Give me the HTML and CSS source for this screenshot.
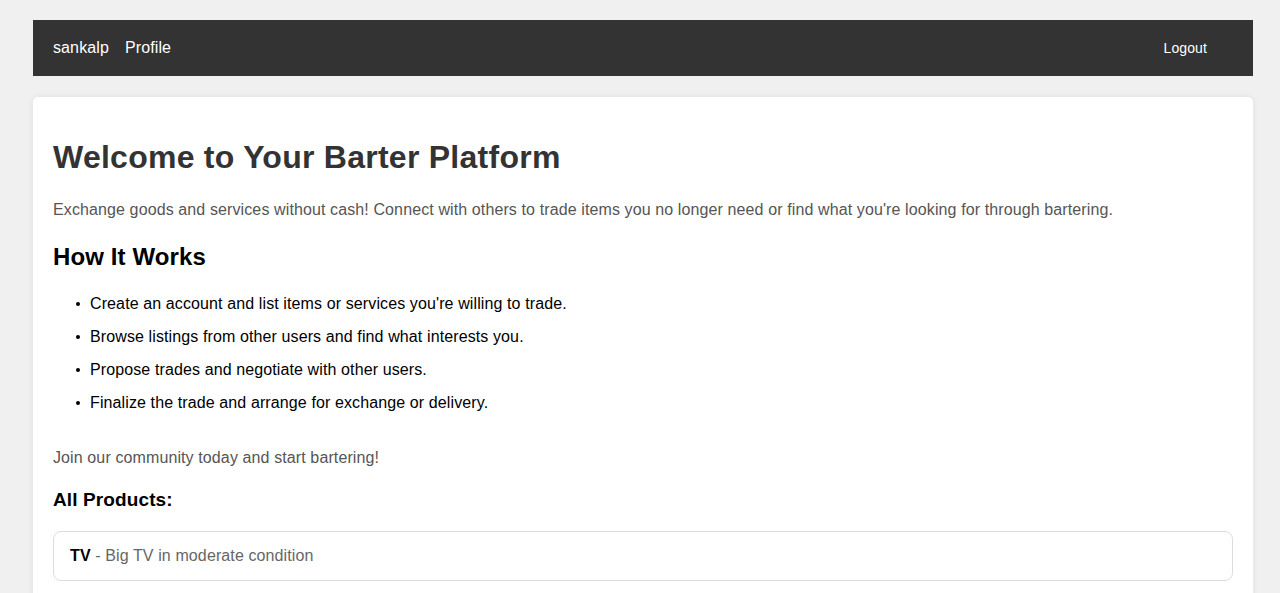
FILE: index.html
```html
<!DOCTYPE html>
<html lang="en">
<head>
<meta charset="utf-8">
<title>Barter Platform</title>
<link rel="stylesheet" href="styles.css">
</head>
<body>
<div class="page">
  <nav class="navbar">
    <div class="nav-left">
      <a class="nav-link" href="#">sankalp</a>
      <a class="nav-link" href="#">Profile</a>
    </div>
    <a class="logout" href="#">Logout</a>
  </nav>
  <main class="card">
    <h1 class="title">Welcome to Your Barter Platform</h1>
    <p class="lead">Exchange goods and services without cash! Connect with others to trade items you no longer need or find what you're looking for through bartering.</p>
    <h2 class="subtitle">How It Works</h2>
    <ul class="steps">
      <li>Create an account and list items or services you're willing to trade.</li>
      <li>Browse listings from other users and find what interests you.</li>
      <li>Propose trades and negotiate with other users.</li>
      <li>Finalize the trade and arrange for exchange or delivery.</li>
    </ul>
    <p class="lead">Join our community today and start bartering!</p>
    <h3 class="section">All Products:</h3>
    <div class="product"><strong class="product-name">TV</strong> - Big TV in moderate condition</div>
  </main>
</div>
</body>
</html>
```

FILE: styles.css
```css
html, body {
  margin: 0;
  padding: 0;
}
body {
  background: #f0f0f0;
  font-family: "Liberation Sans", Arial, sans-serif;
  color: #333;
  letter-spacing: 0.007em;
}
.page {
  width: 1220px;
  padding: 20px 0 0 33px;
}
.navbar {
  display: flex;
  align-items: center;
  justify-content: space-between;
  height: 56px;
  background: #333;
  padding: 0 46px 0 20px;
}
.nav-left {
  display: flex;
  gap: 16px;
}
.nav-link {
  color: #fff;
  text-decoration: none;
  font-size: 16px;
}
.logout {
  color: #fff;
  text-decoration: none;
  font-size: 14px;
}
.card {
  margin-top: 21px;
  background: #fff;
  border-radius: 5px;
  box-shadow: 0 0 6px rgba(0,0,0,0.08);
  padding: 21px 20px 20px;
}
.title {
  font-size: 32px;
  margin: 21px 0 22px;
  color: #333;
  letter-spacing: 0.008em;
}
.lead {
  font-size: 16px;
  color: #555;
  line-height: 1.5;
  margin: 16px 0;
}
.subtitle {
  font-size: 24px;
  color: #000;
  margin: 21px 0 21px;
}
.steps {
  padding-left: 37px;
  margin: 17px 0 31px;
  color: #000;
  list-style: none;
}
.steps li {
  position: relative;
  font-size: 16px;
  line-height: 1.5;
  margin-bottom: 9px;
}
.steps li::before {
  content: "";
  position: absolute;
  left: -14px;
  top: 10px;
  width: 4px;
  height: 4px;
  border-radius: 50%;
  background: #000;
}
.section {
  font-size: 19px;
  color: #000;
  margin: 19px 0 20px;
}
.product {
  border: 1px solid #ddd;
  border-radius: 8px;
  padding: 15px 16px 15px;
  font-size: 16px;
  color: #666;
}
.product-name {
  color: #000;
}
```
